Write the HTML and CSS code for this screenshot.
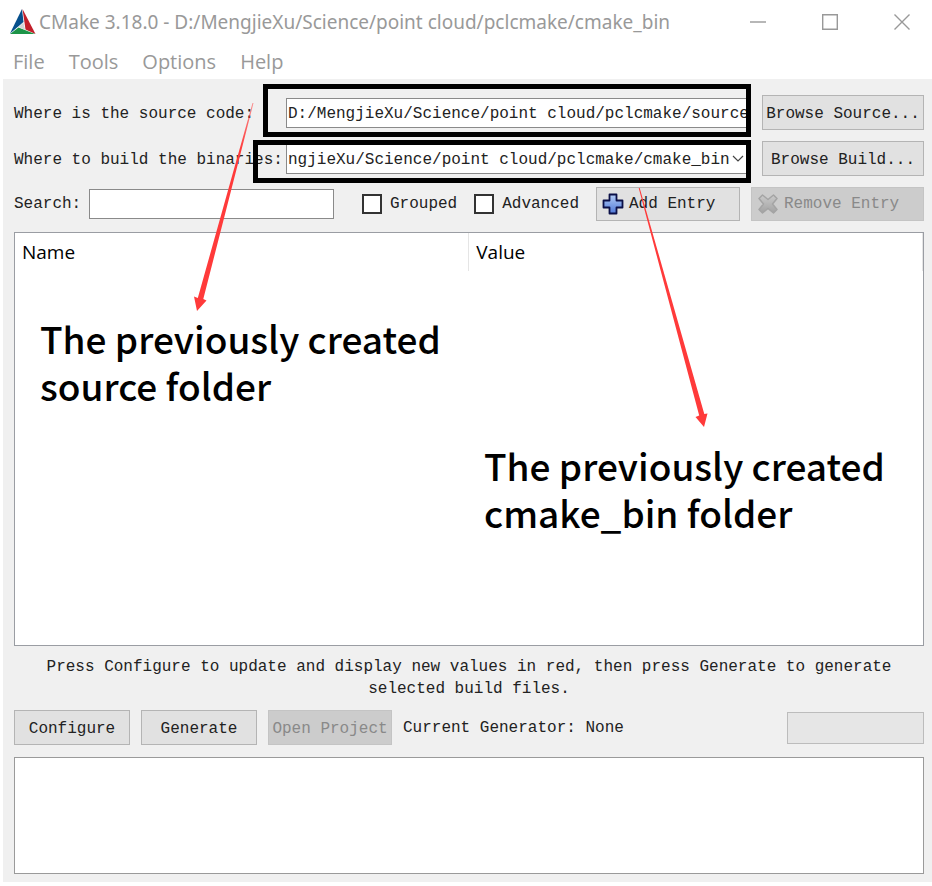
FILE: index.html
```html
<!DOCTYPE html>
<html lang="en">
<head>
<meta charset="utf-8">
<title>CMake 3.18.0</title>
<link rel="stylesheet" href="styles.css">
</head>
<body>
<div class="window">
  <header class="titlebar">
    <svg class="logo" viewBox="0 0 26 26" aria-hidden="true">
      <path d="M12 0 L0 24.500 L13.500 13Z" fill="#064f8c"/>
      <path d="M12.500 0 L25.500 25 L15.500 20.500Z" fill="#c21f2b"/>
      <path d="M0 25 L8.500 18.500 L25 25Z" fill="#1d9448"/>
      <path d="M13.400 13.300 L15.200 21 L8.800 18Z" fill="#d4d6d8"/>
    </svg>
    <h1 class="title">CMake 3.18.0 - D:/MengjieXu/Science/point cloud/pclcmake/cmake_bin</h1>
    <div class="controls">
      <button class="control" aria-label="Minimize"><svg viewBox="0 0 16 16"><path d="M0 8H16"/></svg></button>
      <button class="control" aria-label="Maximize"><svg viewBox="0 0 16 16"><path d="M.7.7H15.300V15.300H.7Z"/></svg></button>
      <button class="control" aria-label="Close"><svg viewBox="0 0 16 16"><path d="M.5.5L15.500 15.500M15.500.5L.5 15.500"/></svg></button>
    </div>
  </header>
  <nav class="menu">
    <a href="#file">File</a>
    <a href="#tools">Tools</a>
    <a href="#options">Options</a>
    <a href="#help">Help</a>
  </nav>
  <main class="panel">
    <div class="paths">
      <label for="source">Where is the source code:</label>
      <div class="field">
        <input id="source" class="box" type="text" value="D:/MengjieXu/Science/point cloud/pclcmake/source">
        <span class="frame frame-source"></span>
      </div>
      <button class="button">Browse Source...</button>
      <label for="build">Where to build the binaries:</label>
      <div class="field">
        <select id="build" class="box">
          <option>ngjieXu/Science/point cloud/pclcmake/cmake_bin</option>
        </select>
        <svg class="chevron" viewBox="0 0 12 8" aria-hidden="true"><path d="M1 1L6 6L11 1"/></svg>
        <span class="frame frame-build"></span>
      </div>
      <button class="button">Browse Build...</button>
    </div>
    <div class="tools">
      <label class="search-label" for="search">Search:</label>
      <input id="search" class="box search" type="text">
      <label class="check"><input type="checkbox">Grouped</label>
      <label class="check"><input type="checkbox">Advanced</label>
      <button class="button add">
        <svg class="icon" viewBox="0 0 22 22" aria-hidden="true">
          <defs><linearGradient id="plus" x1="0" y1="0" x2="0" y2="1"><stop offset="0" stop-color="#b4cdf6"/><stop offset="1" stop-color="#4f78d8"/></linearGradient></defs>
          <path d="M7.500 1.500H14.500V7.500H20.500V14.500H14.500V20.500H7.500V14.500H1.500V7.500H7.500Z" fill="url(#plus)" stroke="#0b1048" stroke-width="1.800" stroke-linejoin="round"/>
        </svg>Add Entry</button>
      <button class="button remove" disabled>
        <svg class="icon" viewBox="0 0 22 22" aria-hidden="true">
          <defs><linearGradient id="cross" x1="0" y1="0" x2="0" y2="1"><stop offset="0" stop-color="#cacaca"/><stop offset="1" stop-color="#a2a2a2"/></linearGradient></defs>
          <path d="M2 5.500L5.500 2L11 6.500L16.500 2L20 5.500L15.500 11L20 16.500L16.500 20L11 15.500L5.500 20L2 16.500L6.500 11Z" fill="url(#cross)" stroke="#a4a4a4" stroke-width="1.500" stroke-linejoin="round"/>
        </svg>Remove Entry</button>
    </div>
    <div class="entries">
      <table>
        <thead><tr><th>Name</th><th>Value</th></tr></thead>
      </table>
    </div>
    <p class="hint">Press Configure to update and display new values in red, then press Generate to generate selected build files.</p>
    <div class="actions">
      <button class="button action">Configure</button>
      <button class="button action">Generate</button>
      <button class="button open" disabled>Open Project</button>
      <span>Current Generator: None</span>
      <span class="progress" role="progressbar" aria-label="Progress"></span>
    </div>
    <textarea class="output" aria-label="Output" readonly></textarea>
  </main>
  <svg class="arrows" viewBox="0 0 932 450" aria-hidden="true">
    <defs>
      <linearGradient id="fade" gradientUnits="userSpaceOnUse" x1="0" y1="100" x2="0" y2="150"><stop offset="0" stop-color="#ff3a3a" stop-opacity=".5"/><stop offset="1" stop-color="#ff3a3a"/></linearGradient>
    </defs>
    <path d="M253.500 103L203.300 299L206.500 300.500L197 311L194 296.500L197.800 298L252.500 103Z" fill="url(#fade)"/>
    <path d="M638.700 188L699.200 415.500L695.500 417L704 427L707.500 413.500L704.300 414L639.700 188Z" fill="#ff3a3a"/>
  </svg>
  <p class="note note-source">The previously created<br>source folder</p>
  <p class="note note-build">The previously created<br>cmake_bin folder</p>
</div>
</body>
</html>
```
FILE: styles.css
```css
* { box-sizing: border-box; }

body {
  margin: 0;
  background: #fff;
  color: #222;
  font: 16px/22px "Liberation Mono", monospace;
}

button, input, select, textarea { font: inherit; color: inherit; margin: 0; }

.window {
  position: relative;
  display: flex;
  flex-direction: column;
  min-height: 100vh;
  padding: 0 0 4px 3px;
}

.titlebar {
  display: flex;
  align-items: center;
  height: 44px;
  padding: 0 22px 0 7px;
  color: #999;
}

.logo { width: 26px; height: 26px; flex: none; }

.title {
  flex: 1;
  margin: 0 0 0 3px;
  font: 400 19px/28px "Noto Sans", sans-serif;
  white-space: nowrap;
}

.controls { display: flex; gap: 56px; }

.control {
  width: 16px;
  height: 16px;
  padding: 0;
  border: 0;
  background: none;
}

.control svg {
  display: block;
  fill: none;
  stroke: #999;
  stroke-width: 1.4;
}

.menu {
  display: flex;
  align-items: center;
  gap: 24px;
  height: 35px;
  padding-left: 10px;
  font: 20px/28px "Open Sans", sans-serif;
}

.menu a { color: #999; text-decoration: none; }

.panel {
  flex: 1;
  display: flex;
  flex-direction: column;
  padding: 16px 8px 8px 11px;
  background: #f0f0f0;
}

.paths {
  display: grid;
  grid-template-columns: 272px 1fr 162px;
  column-gap: 0;
  row-gap: 11px;
  align-items: center;
}

.paths label { padding-top: 2px; white-space: nowrap; }

.field { position: relative; margin-right: 11px; }

.box {
  display: block;
  width: 100%;
  height: 30px;
  padding: 2px 1px 0;
  border: 1px solid #8a8a8a;
  border-radius: 0;
  background: #fff;
  appearance: none;
  outline: 0;
}

.chevron {
  position: absolute;
  right: 7px;
  top: 11px;
  width: 12px;
  height: 8px;
  fill: none;
  stroke: #444;
  stroke-width: 1.2;
}

.frame {
  position: absolute;
  border: 5px solid #000;
  pointer-events: none;
}

.frame-source { inset: -14px 0 -9px -23px; }
.frame-build { inset: -4px 0 -9px -33px; }

.button {
  height: 35px;
  padding: 2px 0 0;
  border: 1px solid #b4b4b4;
  border-radius: 0;
  background: #e1e1e1;
  white-space: nowrap;
}

.button:disabled {
  border-color: #c4c4c4;
  background: #ccc;
  color: #898989;
}

.tools {
  display: flex;
  align-items: center;
  margin-top: 11px;
}

.tools .button {
  display: flex;
  align-items: center;
  gap: 5px;
  height: 34px;
  padding: 0 0 0 5px;
}

.search-label { width: 75px; }
.search { flex: 1; width: 0; margin-right: 28px; }

.check {
  display: flex;
  align-items: center;
  gap: 8px;
  margin-right: 17px;
}

.check input {
  width: 20px;
  height: 20px;
  border: 2px solid #333;
  background: #fff;
  appearance: none;
}

.add { width: 144px; margin-right: 11px; }
.remove { width: 173px; }
.icon { width: 22px; height: 22px; }

.entries {
  flex: 1;
  margin-top: 11px;
  border: 1px solid #9a9da3;
  background: #fff;
}

.entries table {
  width: 100%;
  border-collapse: collapse;
  table-layout: fixed;
  color: #000;
  font: 19px/38px "Open Sans", sans-serif;
}

.entries th {
  padding: 0 0 0 7px;
  border-right: 1px solid #e5e5e5;
  font-weight: 400;
  text-align: left;
}

.hint { margin: 10px 0; padding: 0 30px; text-align: center; }

.actions { display: flex; align-items: center; gap: 11px; }
.action { width: 116px; }
.open { width: 124px; }

.progress {
  width: 137px;
  height: 32px;
  margin-left: auto;
  border: 1px solid #bcbcbc;
  background: #e6e6e6;
}

.output {
  display: block;
  width: 100%;
  height: 117px;
  margin-top: 12px;
  border: 1px solid #9a9a9a;
  border-radius: 0;
  background: #fff;
  outline: 0;
  resize: none;
}

.arrows {
  position: absolute;
  left: 0;
  top: 0;
  width: 932px;
  height: 450px;
  pointer-events: none;
}

.note {
  position: absolute;
  margin: 0;
  color: #000;
  font: 500 37px/47px "Noto Sans CJK SC", sans-serif;
  white-space: nowrap;
}

.note-source { left: 40px; top: 315px; }
.note-build { left: 484px; top: 442px; }
```
